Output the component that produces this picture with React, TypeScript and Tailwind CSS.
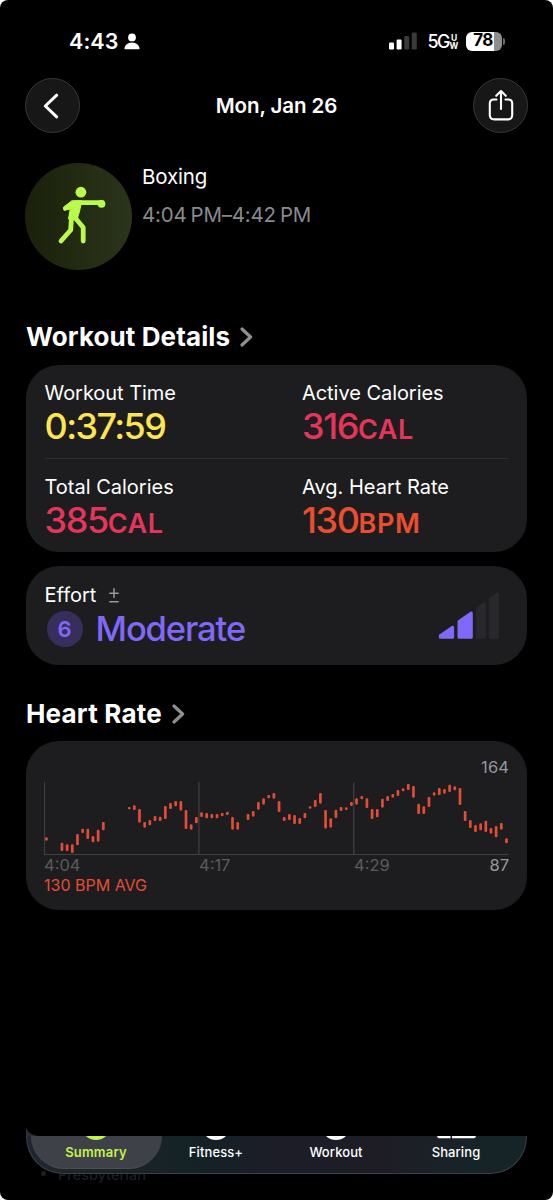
import React from "react";

type Beat = [index: number, top: number, bottom: number];

const BEATS: Beat[] = [
  [0, 292, 302], [3, 308, 333], [4, 313, 333], [5, 313, 339], [6, 282, 316], [7, 266, 279],
  [8, 266, 297], [9, 288, 307], [10, 269, 305], [11, 246, 271], [16, 201, 208], [17, 196, 210],
  [18, 207, 248], [19, 246, 263], [20, 240, 256], [21, 228, 243], [22, 230, 243], [23, 198, 237],
  [24, 189, 207], [25, 183, 199], [26, 183, 212], [27, 210, 267], [28, 253, 269], [29, 231, 250],
  [30, 217, 231], [31, 219, 235], [32, 222, 235], [33, 222, 235], [34, 219, 229], [35, 215, 225],
  [36, 231, 269], [37, 246, 269], [39, 222, 240], [40, 213, 230], [41, 186, 209], [42, 175, 194],
  [43, 165, 175], [44, 159, 176], [45, 183, 216], [46, 231, 243], [47, 222, 240], [48, 225, 252],
  [49, 234, 252], [50, 219, 235], [51, 199, 206], [52, 180, 201], [53, 159, 191], [54, 210, 266],
  [55, 235, 263], [56, 209, 234], [57, 201, 213], [58, 202, 210], [59, 186, 198], [60, 175, 194],
  [61, 168, 178], [62, 175, 204], [63, 207, 237], [64, 207, 232], [65, 176, 203], [66, 168, 183],
  [67, 162, 173], [68, 150, 168], [69, 145, 154], [70, 132, 150], [71, 138, 173], [72, 191, 222],
  [73, 199, 222], [74, 171, 201], [75, 157, 167], [76, 144, 165], [77, 147, 161], [78, 134, 156],
  [79, 139, 151], [80, 144, 195], [81, 213, 243], [82, 240, 264], [83, 255, 276], [84, 250, 271],
  [85, 242, 276], [86, 264, 281], [87, 258, 292], [88, 249, 269], [89, 295, 310],
];

function StatusBar() {
  return (
    <div className="flex h-[82px] items-center justify-between pl-[69px] pr-[48px]">
      <div className="flex items-center gap-[5px]">
        <span className="text-[21.5px] font-semibold leading-6 tracking-[0.1px]">4:43</span>
        <svg className="h-[17px] w-[16px]" viewBox="0 0 16 17" fill="currentColor">
          <circle cx="8" cy="4.4" r="3.9" />
          <path d="M0.5 16.3C0.3 12.6 3.6 9.6 8 9.6s7.7 3 7.500 6.7z" />
        </svg>
      </div>
      <div className="flex items-center">
        <svg className="h-[18px] w-[28px]" viewBox="0 0 28 18">
          <rect x="0" y="10.5" width="5" height="7" rx="1.2" fill="#fff" />
          <rect x="7.6" y="7.5" width="5" height="10" rx="1.2" fill="#fff" />
          <rect x="15.2" y="4" width="5" height="13.5" rx="1.2" fill="#3a3a3c" />
          <rect x="22.8" y="0.5" width="5" height="17" rx="1.2" fill="#3a3a3c" />
        </svg>
        <div className="ml-[10px] flex items-center">
          <span className="pt-[1px] text-[18px] font-medium leading-5 tracking-[-1.5px]">5G</span>
          <span className="ml-[1px] flex w-[8px] flex-col items-center pt-[1px] text-[8.5px] font-bold leading-[8px]">
            <span>U</span>
            <span>W</span>
          </span>
        </div>
        <div className="ml-[8px] flex items-center gap-[1px]">
          <div className="flex h-[19px] w-[36px] items-center justify-center rounded-[6px] bg-[linear-gradient(90deg,#fff_78%,#8e8e8e_78%)] pr-[2px] text-[17px] font-bold tracking-[-0.7px] text-black">
            78
          </div>
          <div className="h-[7px] w-[2px] rounded-r-full bg-[#6b6b6b]" />
        </div>
      </div>
    </div>
  );
}

function Header() {
  return (
    <header className="flex h-[47px] items-center justify-between px-[25px]">
      <button className="flex size-[55px] items-center justify-center rounded-full border border-[#383838] bg-[#171717]">
        <svg className="mr-[4px] h-[26px] w-[16px]" viewBox="0 0 16 26" fill="none" stroke="#fff" strokeWidth="3" strokeLinecap="round" strokeLinejoin="round">
          <path d="M13.7 2.2L2.3 13l11.4 10.8" />
        </svg>
      </button>
      <h1 className="mt-[1px] text-[20.5px] font-semibold leading-6 tracking-[-0.1px]">Mon, Jan 26</h1>
      <button className="flex size-[55px] items-center justify-center rounded-full border border-[#383838] bg-[#171717]">
        <svg className="-mt-[1px] h-[32px] w-[26px]" viewBox="0 0 26 32" fill="none" stroke="#fff" strokeWidth="2.1" strokeLinecap="round" strokeLinejoin="round">
          <path d="M8.5 10.5H5.8Q1.8 10.5 1.8 14.5V26Q1.8 30.4 6.2 30.4H19.8Q24.2 30.4 24.2 26V14.5Q24.2 10.5 20.2 10.5H17.5" />
          <path d="M13 20V2.2M8.2 6.8L13 2l4.8 4.8" />
        </svg>
      </button>
    </header>
  );
}

function Activity() {
  return (
    <section className="mt-[34px] flex h-[107px] gap-[10px] pl-[25px]">
      <div className="size-[107px] rounded-full bg-[linear-gradient(90deg,#1a200a,#2b351a)]">
        <svg className="size-[107px]" viewBox="0 0 107 107" fill="none" stroke="#b9fb4b" strokeLinecap="round" strokeLinejoin="round">
          <circle cx="55.9" cy="29.2" r="5.4" fill="#b9fb4b" stroke="none" />
          <path d="M77 39.700H50L40.500 45" strokeWidth="4.800" />
          <circle cx="76.500" cy="40.800" r="3.900" fill="#b9fb4b" stroke="none" />
          <path d="M47 37.800H57L54.300 49L52 57L43.500 56L45.200 46L39 47.300L38.500 45z" fill="#b9fb4b" strokeWidth="1" />
          <path d="M46.500 54L45.700 67L36 78" strokeWidth="4.800" />
          <path d="M49.500 54L58.200 64.500V78" strokeWidth="4.800" />
        </svg>
      </div>
      <div className="pt-[2px]">
        <p className="text-[20.5px] leading-6 tracking-[-0.15px]">Boxing</p>
        <p className="mt-[14px] whitespace-nowrap text-[20.5px] leading-6 tracking-[-0.2px] text-[#8a8a8e]">
          4:04<span className="ml-[4px]">PM–4:42</span><span className="ml-[4px]">PM</span>
        </p>
      </div>
    </section>
  );
}

function SectionTitle({ children, className }: { children: string; className: string }) {
  return (
    <h2 className={`flex h-[32px] items-center gap-[10px] pl-[26px] text-[26px] font-bold leading-8 ${className}`}>
      {children}
      <svg className="h-[20px] w-[13px]" viewBox="0 0 13 20" fill="none" stroke="#8e8e93" strokeWidth="3.2" strokeLinecap="round" strokeLinejoin="round">
        <path d="M2 2l8.6 8L2 18" />
      </svg>
    </h2>
  );
}

function Metric({ label, value, unit, color }: { label: string; value: string; unit?: string; color: string }) {
  return (
    <div>
      <p className="h-[24px] text-[20px] leading-6">{label}</p>
      <p className={`mt-[-1px] flex h-[44px] items-baseline text-[36px] font-medium leading-[44px] ${color}`}>
        <span className={unit ? "tracking-[-1.4px]" : "tracking-[-1.6px]"}>{value}</span>
        {unit && <span className="text-[27px] font-semibold tracking-[0.6px]">{unit}</span>}
      </p>
    </div>
  );
}

function WorkoutDetails() {
  return (
    <div className="mx-[26px] mt-[12px] h-[187px] rounded-[33px] bg-[#1d1d1f] px-[18.5px] pt-[16px]">
      <div className="grid h-[78px] grid-cols-[257.500px_1fr] border-b border-[#2f2f31] tracking-[-0.05px]">
        <Metric label="Workout Time" value="0:37:59" color="text-[#fde551]" />
        <Metric label="Active Calories" value="316" unit="CAL" color="text-[#e3365a]" />
      </div>
      <div className="grid grid-cols-[257.500px_1fr] pt-[16px]">
        <Metric label="Total Calories" value="385" unit="CAL" color="text-[#e3365a]" />
        <Metric label="Avg. Heart Rate" value="130" unit="BPM" color="text-[#eb4e2f]" />
      </div>
    </div>
  );
}

function Effort() {
  return (
    <div className="mx-[26px] mt-[14px] flex h-[99px] justify-between rounded-[33px] bg-[#1d1d1f] pl-[18.5px] pr-[27px]">
      <div className="pt-[17px]">
        <div className="flex h-[24px] items-center gap-[13px]">
          <span className="text-[20px] leading-6">Effort</span>
          <svg className="h-[15px] w-[10px]" viewBox="0 0 10 15" stroke="#98989d" strokeWidth="1.5" strokeLinecap="round">
            <path d="M5 0.8v8.8M0.8 5.2h8.4M0.8 13.7h8.4" />
          </svg>
        </div>
        <div className="flex h-[44px] items-center pl-[2px]">
          <span className="flex size-[36px] items-center justify-center rounded-full bg-[#382e5c] text-[22px] font-semibold text-[#8068f8]">6</span>
          <span className="ml-[13px] text-[34.500px] font-medium leading-[44px] tracking-[-1.100px] text-[#8068f8]">Moderate</span>
        </div>
      </div>
      <svg className="mt-[26px] h-[48px] w-[62px]" viewBox="0 0 62 48" strokeLinejoin="round" strokeWidth="3">
        <g fill="#8068f8" stroke="#8068f8">
          <path d="M2.3 45.2v-1.4L14.6 35.3v9.9z" />
          <path d="M21 45.2V29.4L33.3 21v24.2z" />
        </g>
        <g fill="#29292d" stroke="#29292d">
          <path d="M39.6 45.2V16.5L46.3 12v33.2z" />
          <path d="M52.4 45.2V7L59.4 2.3v42.9z" />
        </g>
      </svg>
    </div>
  );
}

function HeartRate() {
  return (
    <div className="mx-[26px] mt-[11px] h-[169px] rounded-[33px] bg-[#1d1d1f] px-[18px] pt-[15px]">
      <p className="h-[22px] text-right text-[16.5px] leading-[22px] tracking-[0.1px] text-[#98989d]">164</p>
      <svg className="mt-[2px] h-[76px] w-[465px]" viewBox="44 780 465 76">
        <path d="M44.4 782V854.5H508.5M198.9 782V854M353.8 782V854" fill="none" stroke="#414143" strokeWidth="1.2" />
        {BEATS.map(([i, top, bottom]) => (
          <rect
            key={i}
            x={45.1 + i * 5.169}
            y={740 + top / 3}
            width={2.7}
            height={(bottom - top) / 3}
            rx={1.1}
            fill="#e34d35"
          />
        ))}
      </svg>
      <div className="mt-[-2px] flex h-[22px] items-center text-[16.5px] text-[#5b5b5e]">
        <span className="w-[155px]">4:04</span>
        <span className="w-[155px]">4:17</span>
        <span>4:29</span>
        <span className="ml-auto text-[#98989d]">87</span>
      </div>
      <p className="mt-[-2px] text-[16px] leading-[22px] text-[#e34d35]">130 BPM AVG</p>
    </div>
  );
}

function TabBar() {
  const tab = "flex flex-1 flex-col items-center text-[13px] leading-4";
  return (
    <div className="relative mt-auto h-[72px] px-[26px]">
      <span className="absolute left-[58px] top-[37px] text-[14.500px] font-medium leading-5 text-[#1e1e24]">Presbyterian</span>
      <span className="absolute left-[41px] top-[43px] size-[5px] rounded-full bg-[#1e1e24]" />
      <svg className="absolute left-[26px] top-0 h-[9px] w-[14px]" viewBox="0 0 14 9">
        <path d="M0 0Q3.500 8 14 8.200V9H0z" fill="#293139" />
      </svg>
      <nav className="relative mt-[8px] flex h-[37.500px] overflow-hidden rounded-b-[37px] border-x border-b border-[#39424b] bg-[linear-gradient(90deg,#20262d,#142225_35%,#1c1d27_50%,#1e1d26_72%,#172427_88%)] pl-[9px] pr-[10px]">
        <div className="absolute left-[4px] top-0 h-[32.500px] w-[131px] rounded-b-[33px] border-b border-[#4a4e55] bg-[#3e4147]" />
        <div className={`relative text-[#c1f34c] font-semibold tracking-[0.2px] ${tab}`}>
          <svg className="h-[8px] w-[24px]" viewBox="0 0 24 8" fill="currentColor"><path d="M2 0h20Q18 4 12 4T2 0z" /></svg>
          <span>Summary</span>
        </div>
        <div className={`relative font-medium tracking-[0.1px] ${tab}`}>
          <svg className="h-[8px] w-[24px]" viewBox="0 0 24 8" fill="currentColor"><path d="M2 0h20Q18 4 12 4T2 0z" /></svg>
          <span>Fitness+</span>
        </div>
        <div className={`relative font-medium tracking-[0.1px] ${tab}`}>
          <svg className="h-[8px] w-[24px]" viewBox="0 0 24 8" fill="currentColor"><path d="M2 0h20Q18 4 12 4T2 0z" /></svg>
          <span>Workout</span>
        </div>
        <div className={`relative font-medium tracking-[0.1px] ${tab}`}>
          <svg className="h-[8px] w-[40px]" viewBox="0 0 40 8" fill="currentColor"><path d="M1 0h13.500v2.200H3Q1.500 2.200 1 0zM16 0h24q-.5 2.200-2 2.200H16z" /></svg>
          <span>Sharing</span>
        </div>
      </nav>
    </div>
  );
}

export default function App() {
  return (
    <div className="h-[1200px] w-[553px] bg-white">
      <main className="flex h-full flex-col overflow-hidden rounded-[8px] bg-black font-['Inter','Liberation_Sans',sans-serif] text-white">
        <StatusBar />
        <Header />
        <Activity />
        <SectionTitle className="mt-[51px] tracking-[0.1px]">Workout Details</SectionTitle>
        <WorkoutDetails />
        <Effort />
        <SectionTitle className="mt-[33px] tracking-[0.2px]">Heart Rate</SectionTitle>
        <HeartRate />
        <TabBar />
      </main>
    </div>
  );
}
